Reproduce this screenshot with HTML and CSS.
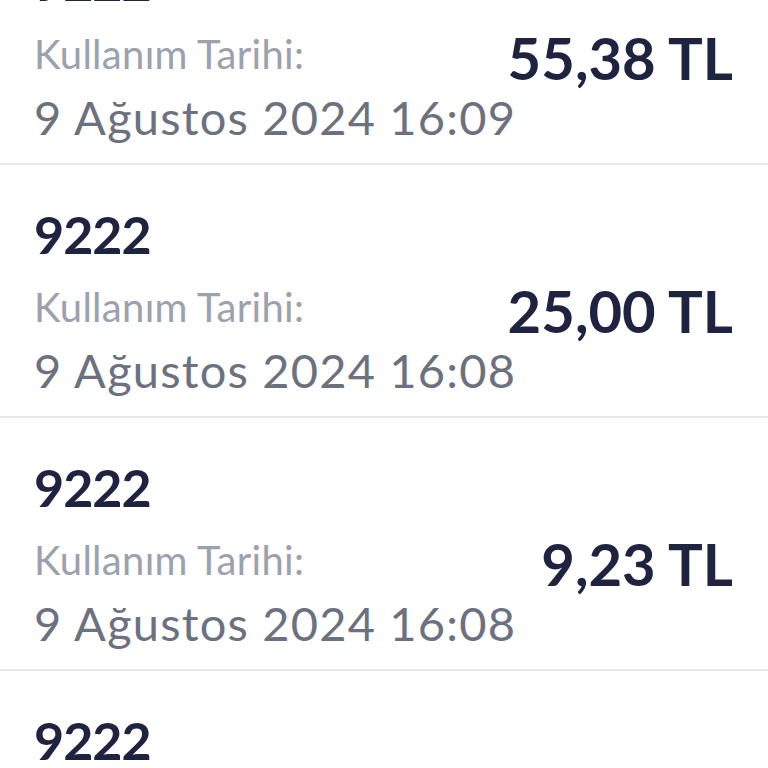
FILE: index.html
```html
<!DOCTYPE html>
<html lang="tr">
<head>
<meta charset="utf-8">
<link rel="stylesheet" href="styles.css">
</head>
<body>
<ul class="list">
  <li class="item">
    <div class="code">9222</div>
    <div class="row">
      <div class="info">
        <div class="label">Kullanım Tarihi:</div>
        <div class="date">9 Ağustos 2024 16:09</div>
      </div>
      <div class="amount">55,38 TL</div>
    </div>
  </li>
  <li class="item">
    <div class="code">9222</div>
    <div class="row">
      <div class="info">
        <div class="label">Kullanım Tarihi:</div>
        <div class="date">9 Ağustos 2024 16:08</div>
      </div>
      <div class="amount">25,00 TL</div>
    </div>
  </li>
  <li class="item">
    <div class="code">9222</div>
    <div class="row">
      <div class="info">
        <div class="label">Kullanım Tarihi:</div>
        <div class="date">9 Ağustos 2024 16:08</div>
      </div>
      <div class="amount">9,23 TL</div>
    </div>
  </li>
  <li class="item">
    <div class="code">9222</div>
  </li>
</ul>
</body>
</html>
```
FILE: styles.css
```css
html, body {
  margin: 0;
  padding: 0;
  background: #ffffff;
  overflow: hidden;
}
body {
  font-family: "Lato", "Noto Sans", sans-serif;
  width: 768px;
  height: 768px;
}
.list {
  list-style: none;
  margin: -88px 0 0 0;
  padding: 0;
}
.item {
  box-sizing: border-box;
  height: 253px;
  padding: 44px 35px 0 34px;
  border-bottom: 2px solid #e7e8eb;
}
.code {
  font-size: 52px;
  font-weight: 700;
  line-height: 50px;
  letter-spacing: -1px;
  color: #1e2340;
}
.row {
  display: flex;
  justify-content: space-between;
  align-items: flex-start;
  margin-top: 26px;
}
.info {
  flex: 1 1 auto;
  min-width: 0;
  white-space: nowrap;
}
.label {
  font-size: 40px;
  line-height: 44px;
  letter-spacing: 0.3px;
  color: #9ba1ae;
}
.date {
  font-size: 47px;
  line-height: 56px;
  letter-spacing: 1.2px;
  margin-top: 13px;
  color: #6b7180;
}
.amount {
  flex: 0 0 auto;
  white-space: nowrap;
  font-size: 58px;
  font-weight: 700;
  line-height: 60px;
  margin-top: -4px;
  color: #1e2340;
}
```
